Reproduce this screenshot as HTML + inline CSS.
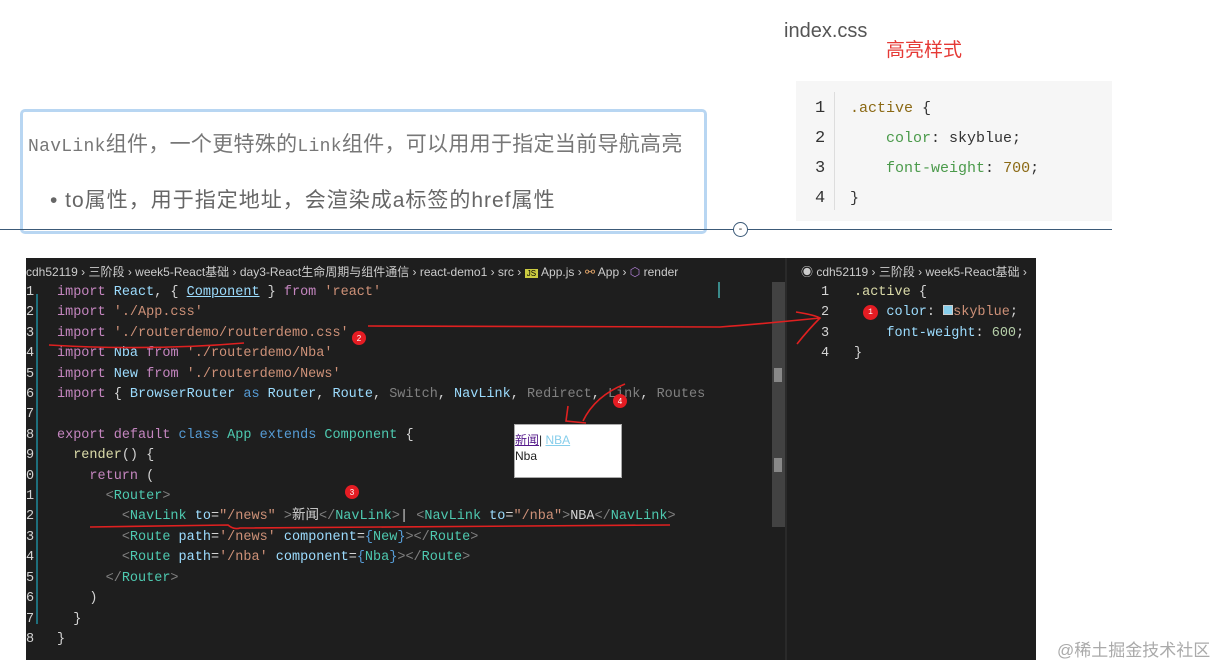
<!DOCTYPE html>
<html><head><meta charset="utf-8"><style>
*{margin:0;padding:0;box-sizing:border-box}
body{width:1224px;height:664px;background:#fff;position:relative;overflow:hidden;font-family:"Liberation Sans","Noto Sans CJK SC",sans-serif}
.a{position:absolute;white-space:pre}
.m{font-family:"Liberation Mono","Noto Sans CJK SC",monospace}
.ed{position:absolute;left:26px;top:258px;width:1010px;height:402px;background:#1e1e1e}
.code .a{font-size:13.5px;color:#d4d4d4;font-family:"Liberation Mono","Noto Sans CJK SC",monospace}
.code .ui{font-family:"Liberation Sans","Noto Sans CJK SC",sans-serif !important}
.k{color:#c586c0}.v{color:#9cdcfe}.s{color:#ce9178}.b{color:#569cd6}.t{color:#4ec9b0}.g{color:#808080}.y{color:#dcdcaa}
.ln{color:#858585;font-size:13px}
</style></head><body>
<div class="a" style="left:784px;top:20px;font-size:20px;color:#555">index.css</div>
<div class="a" style="left:886px;top:35px;font-size:19px;color:#e53935;font-family:'Noto Sans CJK SC',sans-serif">高亮样式</div>
<div class="a" style="left:796px;top:81px;width:316px;height:140px;background:#f6f6f6"></div>
<div class="a" style="left:834px;top:92px;width:1px;height:118px;background:#ddd"></div>
<div class="a m" style="left:815px;top:94px;font-size:17px;line-height:30px;color:#333">1
2
3
4</div>
<div class="a m" style="left:850px;top:94px;font-size:15px;line-height:30px;color:#333"><span style="color:#8b6914">.active</span> {
    <span style="color:#4a9a4a">color</span>: skyblue;
    <span style="color:#4a9a4a">font-weight</span>: <span style="color:#8b6914">700</span>;
}</div>
<div class="a" style="left:20px;top:109px;width:687px;height:125px;border:3px solid #b8d6f2;border-radius:5px;background:#fff"></div>
<div class="a" style="left:28px;top:128px;font-size:21px;color:#777;letter-spacing:0.3px"><span class="m" style="font-size:18px">NavLink</span>组件，一个更特殊的<span class="m" style="font-size:18px">Link</span>组件，可以用用于指定当前导航高亮</div>
<div class="a" style="left:50px;top:184px;font-size:21px;color:#666;letter-spacing:1px">•&nbsp;to属性，用于指定地址，会渲染成a标签的href属性</div>
<div class="a" style="left:0;top:229px;width:1112px;height:1px;background:#3c5a78"></div>
<div class="a" style="left:733px;top:222px;width:15px;height:15px;border:1px solid #3c5a78;border-radius:50%;background:#fff;font-size:11px;line-height:12px;text-align:center;color:#333">-</div>

<div class="ed code">
<div class="a ui" style="left:0;top:5px;font-size:12px;color:#ccc">cdh52119 › 三阶段 › week5-React基础 › day3-React生命周期与组件通信 › react-demo1 › src › <span style="background:#cbcb41;color:#000;font-size:8px"> JS </span> App.js › <span style="color:#e8a86a">⚯</span> App › <span style="color:#b180d7">⬡</span> render</div>
<div class="a" style="left:759px;top:0;width:2px;height:402px;background:#2a2a2a"></div>
<div class="a" style="left:746px;top:24px;width:13px;height:245px;background:#424242"></div>
<div class="a" style="left:748px;top:110px;width:8px;height:14px;background:#888"></div>
<div class="a" style="left:748px;top:200px;width:8px;height:14px;background:#888"></div>
<div class="a" style="left:692px;top:24px;width:2px;height:16px;background:#3a8a8a"></div>
<div class="a ui" style="left:775px;top:5px;font-size:12px;color:#ccc">◉ cdh52119 › 三阶段 › week5-React基础 ›</div>
<div class="a" style="left:10px;top:36px;width:2px;height:330px;background:#1e6f7d"></div>
<div class="a ln" style="left:0;top:25px;line-height:20.4px">1
2
3
4
5
6
7
8
9
0
1
2
3
4
5
6
7
8</div>
<div class="a" style="left:31px;top:25px;line-height:20.4px"><span class="k">import</span> <span class="v">React</span>, { <span class="v" style="text-decoration:underline">Component</span> } <span class="k">from</span> <span class="s">'react'</span>
<span class="k">import</span> <span class="s">'./App.css'</span>
<span class="k">import</span> <span class="s">'./routerdemo/routerdemo.css'</span>
<span class="k">import</span> <span class="v">Nba</span> <span class="k">from</span> <span class="s">'./routerdemo/Nba'</span>
<span class="k">import</span> <span class="v">New</span> <span class="k">from</span> <span class="s">'./routerdemo/News'</span>
<span class="k">import</span> { <span class="v">BrowserRouter</span> <span class="b">as</span> <span class="v">Router</span>, <span class="v">Route</span>, <span class="g">Switch</span>, <span class="v">NavLink</span>, <span class="g">Redirect</span>, <span class="g">Link</span>, <span class="g">Routes</span>

<span class="k">export</span> <span class="k">default</span> <span class="b">class</span> <span class="t">App</span> <span class="b">extends</span> <span class="t">Component</span> {
  <span class="y">render</span>() {
    <span class="k">return</span> (
      <span class="g">&lt;</span><span class="t">Router</span><span class="g">&gt;</span>
        <span class="g">&lt;</span><span class="t">NavLink</span> <span class="v">to</span>=<span class="s">"/news"</span> <span class="g">&gt;</span>新闻<span class="g">&lt;/</span><span class="t">NavLink</span><span class="g">&gt;</span>| <span class="g">&lt;</span><span class="t">NavLink</span> <span class="v">to</span>=<span class="s">"/nba"</span><span class="g">&gt;</span>NBA<span class="g">&lt;/</span><span class="t">NavLink</span><span class="g">&gt;</span>
        <span class="g">&lt;</span><span class="t">Route</span> <span class="v">path</span>=<span class="s">'/news'</span> <span class="v">component</span>=<span class="b">{</span><span class="t">New</span><span class="b">}</span><span class="g">&gt;&lt;/</span><span class="t">Route</span><span class="g">&gt;</span>
        <span class="g">&lt;</span><span class="t">Route</span> <span class="v">path</span>=<span class="s">'/nba'</span> <span class="v">component</span>=<span class="b">{</span><span class="t">Nba</span><span class="b">}</span><span class="g">&gt;&lt;/</span><span class="t">Route</span><span class="g">&gt;</span>
      <span class="g">&lt;/</span><span class="t">Router</span><span class="g">&gt;</span>
    )
  }
}</div>
<div class="a" style="left:488px;top:166px;width:108px;height:54px;background:#fff;border:1px solid #aaa"></div>
<div class="a ui" style="left:489px;top:174px;font-size:12px;color:#222;line-height:16px"><span style="color:#551a8b;text-decoration:underline">新闻</span>| <span style="color:#87ceeb;text-decoration:underline">NBA</span>
Nba</div>
<div class="a ln" style="left:795px;top:25px;line-height:20.4px">1
2
3
4</div>
<div class="a" style="left:828px;top:25px;line-height:20.4px"><span class="y">.active</span> {
    <span class="v">color</span>: <span style="display:inline-block;width:10px;height:10px;background:#87ceeb;border:1px solid #ccc"></span><span class="s">skyblue</span>;
    <span class="v">font-weight</span>: <span style="color:#b5cea8">600</span>;
}</div>
<div class="a" style="left:837px;top:47px;width:15px;height:15px;border-radius:50%;background:#e51c23;color:#fff;font-size:8px;text-align:center;line-height:15px">1</div>
</div>
<svg class="a" style="left:0;top:0" width="1224" height="664">
<g fill="none" stroke="#e02020" stroke-width="1.6">
<path d="M49 345 Q150 351 244 343"/>
<path d="M368 326 L720 327 Q760 324 820 318"/>
<path d="M796 312 Q815 315 820 318 Q808 330 797 344"/>
<path d="M90 527 L228 525 Q234 530 240 528 L670 525"/>
<path d="M568 406 L566 421 L586 423"/>
<path d="M583 421 Q595 396 625 384"/>
</g>
<g fill="#e51c23"><circle cx="359" cy="338" r="7"/><circle cx="620" cy="401" r="7"/><circle cx="352" cy="492" r="7"/></g>
<g fill="#fff" font-size="8" font-family="Liberation Sans" text-anchor="middle"><text x="359" y="341">2</text><text x="620" y="404">4</text><text x="352" y="495">3</text></g>
</svg>
<div class="a" style="left:1057px;top:636px;font-size:17px;color:#aaa">@稀土掘金技术社区</div>
</body></html>
